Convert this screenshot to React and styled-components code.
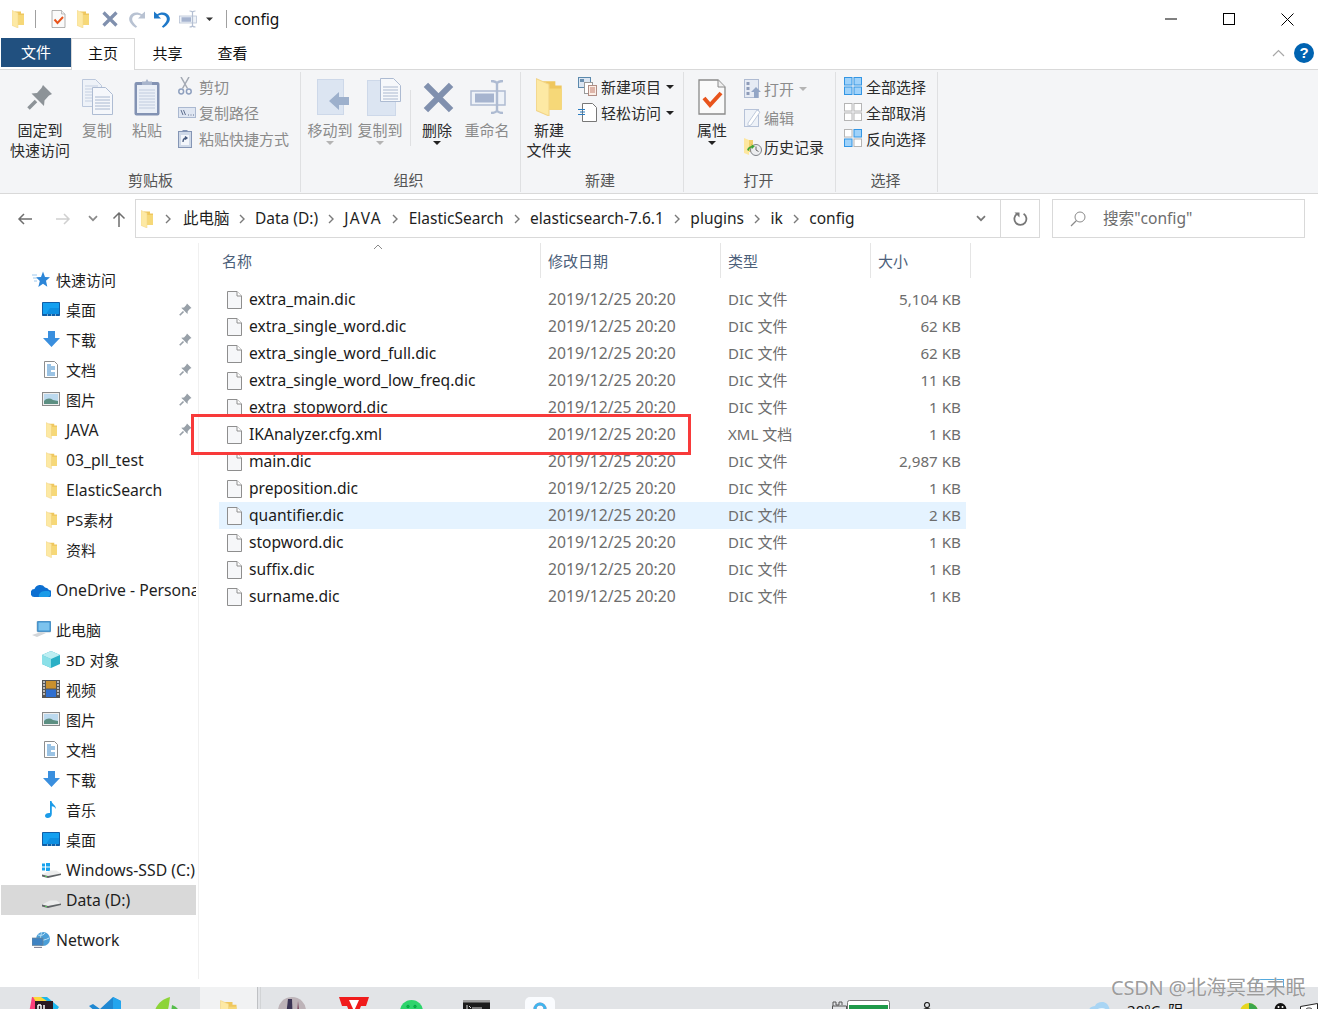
import React from "react";
import styled, { createGlobalStyle } from "styled-components";

const Global = createGlobalStyle`
  html, body { margin: 0; padding: 0; background: #fff; }
  body { font-family: "Noto Sans", "Noto Sans CJK SC", sans-serif; font-size: 15px; color: #1e1e1e; overflow: hidden; }
  * { box-sizing: border-box; }
  svg { display: block; flex-shrink: 0; }
`;

const Page = styled.div`
  position: relative; width: 1318px; height: 1009px; overflow: hidden;
  display: flex; flex-direction: column; background: #fff;
`;

/* ---------- title bar ---------- */
const TitleBar = styled.div`
  height: 38px; display: flex; align-items: center; padding-left: 12px; flex: none;
`;
const QuickSlot = styled.div`
  width: ${p => p.$w}px; display: flex; justify-content: flex-start; flex: none;
`;
const TitleSep = styled.div`
  width: 1px; height: 18px; background: #a0a0a0; flex: none;
  margin: 0 ${p => p.$r}px 0 ${p => p.$l}px;
`;
const TitleText = styled.span`
  font-size: 15.5px; color: #111; line-height: 20px;
`;
const WinControls = styled.div`
  margin-left: auto; display: flex; align-items: center; padding-right: 24px; gap: 46px;
`;

/* ---------- tabs ---------- */
const TabRow = styled.div`
  height: 32px; display: flex; flex: none; position: relative; padding-left: 1px;
  border-bottom: 1px solid #d9d9d9; align-items: stretch;
`;
const FileTab = styled.div`
  width: 70px; height: 29px; background: #21507f; color: #fff; display: flex;
  align-items: center; justify-content: center; font-size: 15px; padding-bottom: 2px;
`;
const HomeTab = styled.div`
  width: 64px; height: 32px; background: #fff; border: 1px solid #d9d9d9; border-bottom: none;
  display: flex; align-items: center; justify-content: center; font-size: 15px; color: #111;
  padding-bottom: 5px; z-index: 1;
`;
const PlainTab = styled.div`
  width: ${p => p.$w}px; display: flex; align-items: center; justify-content: center;
  font-size: 15px; color: #111; height: 29px; padding-bottom: 1px;
`;
const TabRight = styled.div`
  margin-left: auto; display: flex; align-items: center; gap: 9px; padding-right: 4px; height: 30px;
`;
const Help = styled.div`
  width: 20px; height: 20px; border-radius: 50%; background: #0063b1; color: #fff;
  font: bold 15px/20px "Liberation Sans", sans-serif; text-align: center;
`;

/* ---------- ribbon ---------- */
const Ribbon = styled.div`
  height: 124px; background: #f4f5f7; border-bottom: 1px solid #d9d9d9; display: flex; flex: none; padding: 2px 0 1px 1px;
`;
const Group = styled.div`
  width: ${p => p.$w}px; flex: none; border-right: 1px solid #dfe0e2; display: flex; flex-direction: column;
`;
const GroupBody = styled.div`
  height: 98px; display: flex; padding-left: ${p => p.$pl}px;
`;
const GroupLabel = styled.div`
  height: 20px; line-height: 20px; text-align: center; font-size: 15px; color: #555;
  padding-right: ${p => p.$pr || 0}px;
`;
const Big = styled.div`
  width: ${p => p.$w}px; flex: none; display: flex; flex-direction: column; align-items: center;
  font-size: 15px; line-height: 20px; color: ${p => p.$off ? "#8b8b8b" : "#2b2b2b"}; text-align: center;
  margin-right: ${p => p.$mr || 0}px;
`;
const BigIcon = styled.div`
  height: 48px; display: flex; align-items: center; justify-content: center; width: 100%;
  padding-top: 2px; padding-left: ${p => p.$ox || 0}px;
`;
const BigLine = styled.div`
  white-space: nowrap; height: 20px;
`;
const Caret = styled.div`
  width: 0; height: 0; border-left: 4px solid transparent; border-right: 4px solid transparent;
  border-top: 4px solid ${p => p.$off ? "#b4b4b4" : "#222"};
  margin-top: 1px; margin-left: ${p => p.$ml || 0}px;
`;
const VSep = styled.div`
  width: 1px; height: 56px; background: #dfe0e2; margin: 18px 1px 0 5px; flex: none;
`;
const SmallCol = styled.div`
  display: flex; flex-direction: column; margin-left: ${p => p.$ml || 0}px; padding-top: ${p => p.$pt ?? 1}px;
`;
const Small = styled.div`
  height: ${p => p.$h || 26}px; display: flex; align-items: center; font-size: 15px; white-space: nowrap;
  color: ${p => p.$off ? "#8b8b8b" : "#2b2b2b"};
`;
const SmallIcon = styled.span`
  width: ${p => p.$w}px; display: flex; justify-content: flex-start; flex: none;
`;

/* ---------- address row ---------- */
const AddressRow = styled.div`
  height: 49px; flex: none; display: flex; padding: 5px 13px 0 7px; align-items: flex-start;
`;
const NavBtn = styled.div`
  width: ${p => p.$w}px; height: 39px; display: flex; align-items: center; justify-content: center; flex: none;
`;
const AddressBox = styled.div`
  width: 905px; height: 39px; border: 1px solid #d9d9d9; display: flex; align-items: center; flex: none; padding-left: 5px;
`;
const Crumb = styled.span`
  font-size: 15.5px; color: #1e1e1e; white-space: nowrap; margin-top: -2px;
  letter-spacing: ${p => p.$ls || 0}px;
`;
const CrumbChev = styled.span`
  width: ${p => p.$w || 26.5}px; display: flex; justify-content: center; flex: none;
`;
const BoxEnd = styled.div`
  margin-left: auto; display: flex; height: 100%; align-items: center;
`;
const BoxBtn = styled.div`
  width: ${p => p.$w}px; height: 100%; display: flex; align-items: center; justify-content: center;
  border-left: ${p => p.$line ? "1px solid #d9d9d9" : "none"};
`;
const SearchBox = styled.div`
  width: 253px; height: 39px; margin-left: 12px; border: 1px solid #d9d9d9; display: flex; align-items: center;
  padding-left: 17px; gap: 17px; flex: none;
`;
const SearchText = styled.span`
  color: #6d6d6d; font-size: 15.6px; margin-top: -2px;
`;

/* ---------- body ---------- */
const Body = styled.div`
  flex: 1; display: flex; min-height: 0;
`;
const Sidebar = styled.div`
  width: 199px; flex: none; border-right: 1px solid #f0f0f0; padding: 22px 0 0 1px; margin-bottom: 8px;
`;
const NavSection = styled.div`
  margin-top: ${p => p.$gap ? 10 : 0}px;
`;
const NavRow = styled.div`
  width: 195px; height: 30px; display: flex; align-items: center; overflow: hidden; position: relative;
  padding: 0 0 ${p => p.$latin ? 0 : 2}px ${p => p.$lvl === 2 ? 41 : 31}px; background: ${p => p.$sel ? "#d9d9d9" : "transparent"};
  font-size: ${p => p.$latin ? 15.75 : 15}px; color: #1e1e1e; white-space: nowrap;
`;
const NavIcon = styled.span`
  width: 18px; margin-right: 6px; display: flex; justify-content: center; flex: none;
`;
const NavPin = styled.span`
  position: absolute; right: 4px; top: 8px;
`;
const Main = styled.div`
  flex: 1; padding-left: 20px; position: relative;
`;
const Head = styled.div`
  display: grid; grid-template-columns: 322px 180px 150px 100px; height: 43px; position: relative; width: 752px;
`;
const HeadCell = styled.div`
  height: 35px; border-right: 1px solid #e5e5e5; color: #4c607a; font-size: 15px; display: flex; align-items: center;
  padding-left: ${p => p.$first ? 3 : 7}px; position: relative;
`;
const SortCaret = styled.span`
  position: absolute; left: 154px; top: 1px;
`;
const FileRow = styled.div`
  display: grid; grid-template-columns: 321px 180px 150px 96px; width: 747px; height: 27px; align-items: center;
  background: ${p => p.$hl ? "#e5f3ff" : "transparent"};
`;
const NameCell = styled.div`
  display: flex; align-items: center; padding-left: 8px; gap: 7px; font-size: 15.6px; color: #1a1a1a; white-space: nowrap;
`;
const NameText = styled.span`
  margin-top: -2px;
`;
const InfoCell = styled.div`
  padding: 0 0 2px 8px; color: #6d6d6d; font-size: ${p => p.$date ? 15.7 : 15}px; white-space: nowrap;
`;
const SizeCell = styled.div`
  padding: 0 5px 2px 0; text-align: right; color: #6d6d6d; font-size: 15.2px; white-space: nowrap;
`;
const RedBox = styled.div`
  position: absolute; left: 191px; top: 414px; width: 500px; height: 41px; border: 3px solid #f83a3a; z-index: 4;
`;

/* ---------- taskbar ---------- */
const Taskbar = styled.div`
  height: 22px; flex: none; background: #e2e4e7; display: flex; overflow: hidden; padding-left: 14px;
`;
const TaskSlot = styled.div`
  width: ${p => p.$w}px; height: 40px; flex: none; display: flex; justify-content: center;
  padding-top: ${p => p.$top ?? 10}px; background: ${p => p.$active ? "#f1f2f3" : "transparent"};
  margin-left: ${p => p.$ml || 0}px;
  font-size: 15px; color: #111; white-space: pre;
`;
const TaskBars = styled.div`
  width: 4px; height: 22px; flex: none; border-left: 1px solid #bfc1c4; border-right: 1px solid #d2d4d6;
`;
const Watermark = styled.div`
  position: absolute; left: 1111px; top: 975px; z-index: 5; font: 20px/26px "Noto Sans", "Noto Sans CJK SC", sans-serif;
  color: rgba(130,130,130,.8); text-shadow: 0 0 1px #fff; white-space: nowrap; letter-spacing: -.2px;
`;
const WaterBlue = styled.div`
  position: absolute; left: 1256px; top: 979px; width: 28px; height: 9px; border: 1px solid #54a9dd; border-bottom: none; z-index: 3;
`;

/* ---------- icons ---------- */
const Folder = ({ w = 12, h = 18 }) => (
  <svg width={w} height={h} viewBox="0 0 12 18">
    <path d="M3 1.5h6v2h3v11.5H3z" fill="#efc75e" />
    <path d="M0 .4 6 3v15L0 15.4z" fill="#fde9a4" />
    <path d="M6 5h6v10H6z" fill="#f6d878" />
    <path d="M0 .4 6 3v15L0 15.4z" fill="none" stroke="#f2d488" strokeWidth=".5" />
  </svg>
);
const CheckDoc = ({ w = 15, h = 18, sw = 1 }) => (
  <svg width={w} height={h} viewBox="0 0 28 36">
    <path d="M1 1h19l7 7v27H1z" fill="#fafafa" stroke="#8a8a8a" strokeWidth={sw * 1.3} />
    <path d="M20 1v7h7" fill="#efefef" stroke="#8a8a8a" strokeWidth={sw} />
    <path d="M6 19l6 7 11-12" fill="none" stroke="#e8541c" strokeWidth="4" />
  </svg>
);
const Cross = ({ s = 16, c = "#8090ae" }) => (
  <svg width={s} height={s} viewBox="0 0 16 16">
    <path d="M1.5 1.5 14.5 14.5M14.5 1.5 1.5 14.5" stroke={c} strokeWidth="3.2" />
  </svg>
);
const Undo = ({ c = "#1e78c8", flip }) => (
  <svg width="18" height="18" viewBox="0 0 18 18" style={flip ? { transform: "scaleX(-1)" } : undefined}>
    <path d="M1 1.5v7h7L5.2 5.8C8 3.8 12.5 4.6 13.6 7.8c.8 2.600-.7 5-4.800 9l1.600 1c5-3.600 7.200-7 6.200-10.600C15.200 2.500 9 1 4.200 4.200z" fill={c} />
  </svg>
);
const Rename = ({ w = 18, h = 18, c = "#b4bfd2", fill = "#a6b4cf" }) => (
  <svg width={w} height={h} viewBox="0 0 36 34">
    <rect x="1" y="11" width="34" height="14" fill="#eef2f8" stroke={c} strokeWidth="1.500" />
    <rect x="5" y="13.500" width="19" height="9" fill={fill} />
    <path d="M21 1c3 0 5 1 6 2 1-1 3-2 6-2M27 3v28M21 33c3 0 5-1 6-2 1 1 3 2 6 2" fill="none" stroke={c} strokeWidth="2.400" />
  </svg>
);
const Tri = ({ c = "#222", s = 8 }) => (
  <svg width={s} height={s / 2 + 1} viewBox="0 0 8 5"><path d="M0 .5h8L4 4.500z" fill={c} /></svg>
);
const Pin = ({ s = 13, c = "#98a0a8" }) => (
  <svg width={s} height={s} viewBox="0 0 26 26">
    <path d="M16 1 25 10 22 11.500 17.500 16.500 17 22 4.500 9.500 10 9 14.500 4z" fill={c} />
    <path d="M9 17 1.500 24.500" stroke={c} strokeWidth="3.500" />
  </svg>
);
const CopyIcon = () => (
  <svg width="31" height="36" viewBox="0 0 31 36">
    <path d="M.5.5h13l6 6v21H.500z" fill="#eef2f8" stroke="#bcc8dc" />
    <path d="M3 7h13M3 10h13M3 13h13M3 16h13M3 19h13M3 22h13" stroke="#c5d0e2" />
    <path d="M10.500 8.500h13l7 7v20h-20z" fill="#f5f7fb" stroke="#aebcd3" />
    <path d="M13 18h15M13 21h15M13 24h15M13 27h15M13 30h15" stroke="#a9b8d0" />
  </svg>
);
const PasteIcon = () => (
  <svg width="26" height="38" viewBox="0 0 26 38">
    <rect x=".5" y="4" width="25" height="33.500" rx="2" fill="#8292b3" />
    <rect x="3" y="7" width="20" height="28" fill="#eaeff7" />
    <path d="M5 12h16M5 15h16M5 18h16M5 21h16M5 24h16M5 27h16M5 30h16" stroke="#c0cbde" />
    <path d="M8 7V3.500h3.500L13 1l1.500 2.500H18V7z" fill="#a7b4cc" />
  </svg>
);
const Scissors = () => (
  <svg width="14" height="18" viewBox="0 0 14 18">
    <path d="M3 0l6.500 11.500M11 0 4.500 11.500" stroke="#a3a9b3" strokeWidth="1.500" />
    <circle cx="3.200" cy="14.500" r="2.400" fill="none" stroke="#8fa0bf" strokeWidth="1.500" />
    <circle cx="10.800" cy="14.500" r="2.400" fill="none" stroke="#8fa0bf" strokeWidth="1.500" />
  </svg>
);
const PathIcon = () => (
  <svg width="18" height="11" viewBox="0 0 18 11">
    <rect x=".5" y=".5" width="17" height="10" fill="#dfe6f2" stroke="#aab8d0" />
    <path d="M3 3l2 5M5.500 3l2 5" stroke="#5f6f8f" />
    <path d="M10 8h1M12.500 8h1M15 8h1" stroke="#5f6f8f" />
  </svg>
);
const ShortcutIcon = () => (
  <svg width="14" height="19" viewBox="0 0 14 19">
    <rect x=".5" y="2.500" width="13" height="16" fill="#cfd9e8" stroke="#8495b5" />
    <path d="M4.500 2.500V1h5v1.500z" fill="#8495b5" />
    <rect x="3" y="6" width="8" height="10" fill="#f3f6fb" />
    <path d="M5 13c0-3 1.500-4 3.500-4M7 7.500l2 1.500-2 1.500" fill="none" stroke="#46597d" strokeWidth="1.300" />
  </svg>
);
const MoveIcon = () => (
  <svg width="33" height="36" viewBox="0 0 33 36">
    <rect x=".5" y=".5" width="26" height="35" fill="#dce5f2" stroke="#cdd8e9" />
    <path d="M12 27 22 36v-5h10V23H22v-5z" transform="translate(0 -5)" fill="#9db0cc" />
  </svg>
);
const CopyToIcon = () => (
  <svg width="34" height="38" viewBox="0 0 34 38">
    <rect x=".5" y="2.500" width="28" height="35" fill="#dce5f2" stroke="#cdd8e9" />
    <path d="M13.500.5h13l7 7v16h-20z" fill="#f6f8fb" stroke="#adbbd2" />
    <path d="M16 9h15M16 12h15M16 15h15M16 18h15M16 21h15" stroke="#aab8cf" />
  </svg>
);
const NewItemIcon = () => (
  <svg width="19" height="19" viewBox="0 0 19 19">
    <rect x=".5" y=".5" width="12" height="10" fill="#dce6f2" stroke="#5b89ad" />
    <rect x="2" y="2" width="4" height="3" fill="#6a8fb0" />
    <rect x="6.500" y="5.500" width="8" height="11" fill="#fff" stroke="#9a9a9a" />
    <rect x="10.500" y="8.500" width="8" height="10" fill="#fbeee6" stroke="#b08d84" />
    <path d="M12 11h5M12 13h5M12 15h5" stroke="#c27d6c" />
  </svg>
);
const EasyIcon = () => (
  <svg width="19" height="19" viewBox="0 0 19 19">
    <path d="M4.500.5h10l4 4v14h-14z" fill="#fff" stroke="#777" />
    <path d="M0 6.500h7M2 9h5M0 11.500h7" stroke="#2b7cc0" />
  </svg>
);
const OpenIcon = () => (
  <svg width="17" height="19" viewBox="0 0 17 19">
    <rect x=".5" y=".5" width="14" height="18" fill="#e6ebf4" stroke="#afbbd2" />
    <rect x="2.500" y="3" width="3" height="3" fill="#8d9bb8" />
    <rect x="2.500" y="8" width="3" height="3" fill="#8d9bb8" />
    <rect x="2.500" y="13" width="3" height="3" fill="#8d9bb8" />
    <path d="M12 8l5 5h-3v6h-4v-6H7z" fill="#93a6c6" />
  </svg>
);
const EditIcon = () => (
  <svg width="17" height="19" viewBox="0 0 17 19">
    <rect x=".5" y="1.500" width="14" height="17" fill="#eef2f8" stroke="#b6c2d8" />
    <path d="M4 15 13 2l3 2-9 13-3 1z" fill="#fff" stroke="#c0cbdd" />
  </svg>
);
const HistoryIcon = () => (
  <svg width="18" height="18" viewBox="0 0 18 18">
    <path d="M0 0l5 2v15l-5-2z" fill="#fde7a0" />
    <path d="M5 2h4v12H5z" fill="#f2cf6b" />
    <circle cx="12" cy="12" r="5.500" fill="#ecedef" stroke="#7f8388" />
    <path d="M12 8.500V12l2.500 1.500" stroke="#666" fill="none" />
    <path d="M3 12c1-3 3-4 5-4l-1-1.500 4 1.500-3 3-.5-1.500C6 10 5 11 5 13z" fill="#3fa535" />
  </svg>
);
const Tiles = ({ on = [1, 1, 1, 1] }) => (
  <svg width="18" height="18" viewBox="0 0 18 18">
    {[[0, 0], [9.5, 0], [0, 9.500], [9.500, 9.500]].map(([x, y], i) => (
      <rect key={i} x={x + .5} y={y + .5} width="7.500" height="7.500"
        fill={on[i] ? "#9fd2fa" : "#fff"} stroke={on[i] ? "#3396e4" : "#b5b5b5"} />
    ))}
  </svg>
);
const Arrow = ({ c = "#6e6e6e", flip }) => (
  <svg width="16" height="14" viewBox="0 0 16 14" style={flip ? { transform: "scaleX(-1)" } : undefined}>
    <path d="M15 7H2M7 2 2 7l5 5" fill="none" stroke={c} strokeWidth="1.500" />
  </svg>
);
const ChevDown = ({ c = "#777", w = 10 }) => (
  <svg width={w} height="7" viewBox="0 0 10 7"><path d="M1 1.200 5 5.200l4-4" fill="none" stroke={c} strokeWidth="1.700" /></svg>
);
const ChevRight = () => (
  <svg width="6" height="10" viewBox="0 0 6 10"><path d="M1 1l4 4-4 4" fill="none" stroke="#7a7a7a" strokeWidth="1.400" /></svg>
);
const UpArrow = () => (
  <svg width="14" height="16" viewBox="0 0 14 16"><path d="M7 16V2M1.500 7.500 7 2l5.500 5.500" fill="none" stroke="#6e6e6e" strokeWidth="1.500" /></svg>
);
const Refresh = () => (
  <svg width="15" height="16" viewBox="0 0 15 16">
    <path d="M4.200 2.800a6 6 0 1 0 6.400 0" fill="none" stroke="#777" strokeWidth="1.800" />
    <path d="M1.500 1.500h5v5z" fill="#777" />
  </svg>
);
const Magnifier = () => (
  <svg width="16" height="16" viewBox="0 0 16 16">
    <circle cx="10" cy="6" r="5" fill="none" stroke="#8a8a8a" />
    <path d="M6.500 9.500 1 15" stroke="#8a8a8a" strokeWidth="1.200" />
  </svg>
);
const FileIcon = () => (
  <svg width="15" height="18" viewBox="0 0 15 18">
    <path d="M.5.5h9.500l4.500 4.500v12.500H.500z" fill="#f6f7f9" stroke="#8e8e8e" />
    <path d="M10 .5V5h4.500" fill="#fff" stroke="#8e8e8e" />
  </svg>
);
const Star = () => (
  <svg width="18" height="17" viewBox="0 0 18 17">
    <path d="M11 .5l2 5.500 5 .3-4 3.500 1.300 6L11 12.800 6.300 16l1.500-6L4 6.300l5-.3z" fill="#2c86d8" />
    <path d="M0 4h5M1 7h4M2 10h3" stroke="#9cc8ee" />
  </svg>
);
const Desktop = () => (
  <svg width="18" height="14" viewBox="0 0 18 14">
    <rect width="18" height="14" rx=".8" fill="#0f5ea8" />
    <rect x="1" y="1" width="16" height="11" fill="#14a0f0" />
    <path d="M4 12 8 6l9 0v6z" fill="#0d8ee0" />
    <path d="M5 13h1M9 13h1M13 13h1" stroke="#dff" />
  </svg>
);
const Download = () => (
  <svg width="17" height="16" viewBox="0 0 17 16">
    <path d="M5 0h7v7h5l-8.500 9L0 7h5z" fill="#3a8fde" />
  </svg>
);
const Docs = () => (
  <svg width="14" height="17" viewBox="0 0 14 17">
    <path d="M.5.5h10l3 3v13H.500z" fill="#fff" stroke="#8d8d8d" />
    <path d="M3 4h4M3 6h8M3 8h8M3 10h4M3 12h8M3 14h8" stroke="#3786c8" />
  </svg>
);
const Pictures = () => (
  <svg width="18" height="14" viewBox="0 0 18 14">
    <rect x=".5" y=".5" width="17" height="13" fill="#eee" stroke="#8a8a8a" />
    <rect x="2" y="2" width="14" height="10" fill="#bcd9ee" />
    <path d="M2 9c3-3 6-3 9-1l5 1v3H2z" fill="#5c8f82" />
  </svg>
);
const Cloud = () => (
  <svg width="20" height="13" viewBox="0 0 20 13">
    <path d="M4 13a4 4 0 0 1-.5-8A6 6 0 0 1 14 3.500a4.500 4.500 0 0 1 4 2.500 3.500 3.500 0 0 1-1 7z" fill="#0c6fd1" />
    <path d="M8 13c-1-3 2-6 6-6 3 0 4 0 4 0a3.500 3.500 0 0 1-1 6z" fill="#1a9be8" />
  </svg>
);
const PC = () => (
  <svg width="20" height="17" viewBox="0 0 20 17">
    <rect x="6" y="0" width="14" height="11" rx="1" fill="#3d90cf" stroke="#7a99ad" strokeWidth=".5" />
    <rect x="7.500" y="1.500" width="11" height="8" fill="#7cc3ee" />
    <path d="M1 14l9-3 5 1-9 4z" fill="#d3d6d9" />
  </svg>
);
const Cube = () => (
  <svg width="18" height="17" viewBox="0 0 18 17">
    <path d="M9 0l9 4v9l-9 4-9-4V4z" fill="#2ab0c6" />
    <path d="M0 4l9 4v9l-9-4z" fill="#8be0e8" />
    <path d="M9 0l9 4-9 4-9-4z" fill="#bdeef2" />
  </svg>
);
const Video = () => (
  <svg width="18" height="18" viewBox="0 0 18 18">
    <rect width="18" height="18" fill="#555" />
    <rect x="4" y="1" width="10" height="7.500" fill="#c9902e" />
    <rect x="4" y="9.500" width="10" height="7.500" fill="#2f6fd0" />
    <path d="M1 2h2M1 5h2M1 8h2M1 11h2M1 14h2M15 2h2M15 5h2M15 8h2M15 11h2M15 14h2" stroke="#ddd" strokeWidth="1.300" />
  </svg>
);
const Music = () => (
  <svg width="12" height="17" viewBox="0 0 12 17">
    <path d="M5 0h1.500c.3 3 4.500 4 4.500 8-.8-1.500-2.500-2.500-4.200-2.700V13c0 2.500-2 4-4.300 4C.8 17 0 16 0 14.800 0 13 2 11.700 5 12z" fill="#1b9be8" />
  </svg>
);
const Drive = ({ win }) => (
  <svg width="19" height="15" viewBox="0 0 19 15">
    {win && <path d="M0 .5h3v3H0zM4 0h4v3.500H4zM0 4.500h3v3H0zM4 4.500h4V8H4z" fill="#19a3ee" />}
    <path d="M0 11.500 8 7.500h6.500l4.500 3L6 13z" fill="#eceded" />
    <path d="M0 11.500 6 13l13-2.500V12L6 15l-6-1.500z" fill="#5f6366" />
    <rect x="3" y="13" width="2" height="1" fill="#5ac85a" />
  </svg>
);
const NetworkIcon = () => (
  <svg width="19" height="16" viewBox="0 0 19 16">
    <circle cx="11" cy="7" r="7" fill="#4b9fd8" />
    <path d="M6 3c3 1 6 0 7-2M5 8c4 1 9 0 12-2M10 0c-2 4-2 9 1 14" stroke="#bfe3f6" fill="none" />
    <rect x="0" y="6" width="11" height="7.500" fill="#3e83c2" stroke="#6f8595" strokeWidth=".7" />
    <path d="M2 15.500h8" stroke="#889" strokeWidth="1.300" />
  </svg>
);

/* taskbar drawings */
const IdeaIcon = () => (
  <svg width="30" height="30" viewBox="0 0 30 30">
    <path d="M3 0h9l-3 16H0z" fill="#fc3f7a" />
    <path d="M8 0h10l12 10-8 12z" fill="#1cb6ee" />
    <path d="M4 0h8l6 4-8 6z" fill="#fcd83a" />
    <rect x="6" y="4" width="18" height="18" fill="#2a1a22" />
    <path d="M9 8v6M12 8v6M9 8h3M9 14h3M15 8v6h3" stroke="#fff" strokeWidth="1.500" fill="none" />
  </svg>
);
const VSCode = () => (
  <svg width="32" height="30" viewBox="0 0 32 30">
    <path d="M24 0l8 4v22l-8 4-13-12-7 5-4-2 7-6-7-6 4-2 7 5z" fill="#1f88d2" />
    <path d="M24 0l8 4v22l-8 4z" fill="#23a5ee" />
  </svg>
);
const GreenApp = () => (
  <svg width="31" height="30" viewBox="0 0 31 30">
    <path d="M2 18C3 8 10 2 18 0c-1 8-2 18-8 26z" fill="#8dd438" />
    <path d="M20 8c6 2 10 8 10 16H18z" fill="#55bd4a" />
  </svg>
);
const Avatar = () => (
  <svg width="28" height="28" viewBox="0 0 28 28">
    <circle cx="14" cy="14" r="14" fill="#bdb3b8" />
    <path d="M7 28 10 2h4l1 26z" fill="#3b3454" />
    <path d="M20 4l3 24h-5z" fill="#7d4a60" />
  </svg>
);
const Wps = () => (
  <svg width="30" height="26" viewBox="0 0 30 26">
    <path d="M0 0h30l-3 9H22l-7 17L8 9H3z" fill="#f01c1c" />
    <path d="M10 3l5 11 5-11z" fill="#fff" />
  </svg>
);
const WeChat = () => (
  <svg width="23" height="23" viewBox="0 0 23 23">
    <circle cx="11.500" cy="11.500" r="11.500" fill="#2fd46c" />
    <circle cx="8" cy="6.500" r="1.300" fill="#0c3" stroke="#075" strokeWidth=".5" />
    <circle cx="15" cy="6.500" r="1.300" fill="#0c3" stroke="#075" strokeWidth=".5" />
  </svg>
);
const Cmd = () => (
  <svg width="27" height="24" viewBox="0 0 27 24">
    <rect width="27" height="24" fill="#1b1b1b" />
    <rect width="27" height="2.500" fill="#9d9d9d" />
    <path d="M3 6h2M3 8h2M6 6l2 2M9 8h10" stroke="#ddd" />
  </svg>
);
const WhiteApp = () => (
  <svg width="30" height="30" viewBox="0 0 30 30">
    <rect width="30" height="30" rx="5" fill="#fafcff" />
    <circle cx="15" cy="12" r="5" fill="none" stroke="#f07a9a" strokeWidth="3" />
    <path d="M10 12a5 5 0 0 1 10 0" fill="none" stroke="#3fb6ee" strokeWidth="3" />
  </svg>
);
const Battery = () => (
  <svg width="59" height="20" viewBox="0 0 59 20">
    <path d="M1 6V2h3v3h3V2h3v3" fill="none" stroke="#555" />
    <path d="M.5 6h14V20H.500z" fill="none" stroke="#555" />
    <rect x="15.500" y=".5" width="42" height="18" rx="2" fill="#fff" stroke="#777" />
    <rect x="17" y="5" width="39" height="14" fill="#1f9a4a" />
  </svg>
);
const Person = () => (
  <svg width="10" height="12" viewBox="0 0 10 12">
    <circle cx="5" cy="3" r="2.500" fill="none" stroke="#222" strokeWidth="1.200" />
    <path d="M0 12c0-4 2-5.500 5-5.500S10 8 10 12" fill="none" stroke="#222" strokeWidth="1.200" />
  </svg>
);
const Weather = () => (
  <svg width="22" height="12" viewBox="0 0 22 12">
    <path d="M0 12C0 6 4 4 7 4c1-3 4-4 7-4 5 0 8 4 8 12z" fill="#a9d5f4" />
    <path d="M7 12c0-4 3-6 7-6 4 0 6 3 6 6z" fill="#e9f5fd" />
  </svg>
);
const YellowTray = () => (
  <svg width="18" height="12" viewBox="0 0 18 12">
    <circle cx="9" cy="9" r="9" fill="#e6d61f" />
    <path d="M9 0a9 9 0 0 1 9 9H9z" fill="#3ba64c" />
  </svg>
);
const QQ = () => (
  <svg width="15" height="12" viewBox="0 0 15 12">
    <ellipse cx="7.500" cy="7" rx="6" ry="7" fill="#111" />
    <circle cx="5.500" cy="4" r="1" fill="#fff" /><circle cx="9.500" cy="4" r="1" fill="#fff" />
  </svg>
);
const TrayBox = () => (
  <svg width="18" height="12" viewBox="0 0 18 12">
    <path d="M.5 3.500 17.500.5v11H.500z" fill="#fff" stroke="#222" />
    <rect x="6" y="5" width="6" height="6" rx="2" fill="none" stroke="#444" />
  </svg>
);

/* ---------- data ---------- */
const files = [
  ["extra_main.dic", "DIC 文件", "5,104 KB"],
  ["extra_single_word.dic", "DIC 文件", "62 KB"],
  ["extra_single_word_full.dic", "DIC 文件", "62 KB"],
  ["extra_single_word_low_freq.dic", "DIC 文件", "11 KB"],
  ["extra_stopword.dic", "DIC 文件", "1 KB"],
  ["IKAnalyzer.cfg.xml", "XML 文档", "1 KB"],
  ["main.dic", "DIC 文件", "2,987 KB"],
  ["preposition.dic", "DIC 文件", "1 KB"],
  ["quantifier.dic", "DIC 文件", "2 KB", true],
  ["stopword.dic", "DIC 文件", "1 KB"],
  ["suffix.dic", "DIC 文件", "1 KB"],
  ["surname.dic", "DIC 文件", "1 KB"],
];
const crumbs = ["此电脑", "Data (D:)", "JAVA", "ElasticSearch", "elasticsearch-7.6.1", "plugins", "ik", "config"];

const Nav = ({ icon, lvl = 2, pin, sel, latin, children }) => (
  <NavRow $lvl={lvl} $sel={sel} $latin={latin}>
    <NavIcon>{icon}</NavIcon>
    {children}
    {pin && <NavPin><Pin /></NavPin>}
  </NavRow>
);

export default function App() {
  return (
    <Page>
      <Global />
      <TitleBar>
        <Folder />
        <TitleSep $l={11} $r={15} />
        <QuickSlot $w={26}><CheckDoc /></QuickSlot>
        <QuickSlot $w={25}><Folder /></QuickSlot>
        <QuickSlot $w={26}><Cross /></QuickSlot>
        <QuickSlot $w={25}><Undo c="#b8c2d2" flip /></QuickSlot>
        <QuickSlot $w={26}><Undo /></QuickSlot>
        <QuickSlot $w={27}><Rename /></QuickSlot>
        <Tri c="#333" s={7} />
        <TitleSep $l={13} $r={7} />
        <TitleText>config</TitleText>
        <WinControls>
          <svg width="12" height="12" viewBox="0 0 12 12"><path d="M0 6h12" stroke="#000" /></svg>
          <svg width="12" height="12" viewBox="0 0 12 12"><rect x=".5" y=".5" width="11" height="11" fill="none" stroke="#000" /></svg>
          <svg width="13" height="13" viewBox="0 0 13 13"><path d="M.5.5l12 12M12.500.5l-12 12" stroke="#000" /></svg>
        </WinControls>
      </TitleBar>

      <TabRow>
        <FileTab>文件</FileTab>
        <HomeTab>主页</HomeTab>
        <PlainTab $w={65}>共享</PlainTab>
        <PlainTab $w={65}>查看</PlainTab>
        <TabRight>
          <svg width="13" height="8" viewBox="0 0 13 8"><path d="M1 7l5.500-5.500L12 7" fill="none" stroke="#a8a8a8" strokeWidth="1.200" /></svg>
          <Help>?</Help>
        </TabRight>
      </TabRow>

      <Ribbon>
        <Group $w={300}>
          <GroupBody $pl={9}>
            <Big $w={60}><BigIcon><Pin s={26} c="#8d9398" /></BigIcon><BigLine>固定到</BigLine><BigLine>快速访问</BigLine></Big>
            <Big $w={54} $off><BigIcon><CopyIcon /></BigIcon><BigLine>复制</BigLine></Big>
            <Big $w={46} $off $mr={8}><BigIcon><PasteIcon /></BigIcon><BigLine>粘贴</BigLine></Big>
            <SmallCol>
              <Small $off><SmallIcon $w={21}><Scissors /></SmallIcon>剪切</Small>
              <Small $off><SmallIcon $w={21}><PathIcon /></SmallIcon>复制路径</Small>
              <Small $off><SmallIcon $w={21}><ShortcutIcon /></SmallIcon>粘贴快捷方式</Small>
            </SmallCol>
          </GroupBody>
          <GroupLabel>剪贴板</GroupLabel>
        </Group>
        <Group $w={220}>
          <GroupBody $pl={4}>
            <Big $w={50} $off><BigIcon $ox={6}><MoveIcon /></BigIcon><BigLine>移动到</BigLine><Caret $off /></Big>
            <Big $w={50} $off><BigIcon $ox={8}><CopyToIcon /></BigIcon><BigLine>复制到</BigLine><Caret $off /></Big>
            <VSep />
            <Big $w={50}><BigIcon $ox={2}><Cross s={31} /></BigIcon><BigLine>删除</BigLine><Caret /></Big>
            <Big $w={50} $off><BigIcon $ox={2}><Rename w={36} h={34} c="#aebbd2" /></BigIcon><BigLine>重命名</BigLine></Big>
          </GroupBody>
          <GroupLabel $pr={4}>组织</GroupLabel>
        </Group>
        <Group $w={163}>
          <GroupBody $pl={3}>
            <Big $w={50}><BigIcon><Folder w={26} h={38} /></BigIcon><BigLine>新建</BigLine><BigLine>文件夹</BigLine></Big>
            <SmallCol $ml={4}>
              <Small><SmallIcon $w={23}><NewItemIcon /></SmallIcon>新建项目<Caret $ml={5} /></Small>
              <Small><SmallIcon $w={23}><EasyIcon /></SmallIcon>轻松访问<Caret $ml={5} /></Small>
            </SmallCol>
          </GroupBody>
          <GroupLabel $pr={4}>新建</GroupLabel>
        </Group>
        <Group $w={152}>
          <GroupBody $pl={3}>
            <Big $w={50}><BigIcon><CheckDoc w={28} h={36} /></BigIcon><BigLine>属性</BigLine><Caret /></Big>
            <SmallCol $ml={7} $pt={2}>
              <Small $h={29} $off><SmallIcon $w={20}><OpenIcon /></SmallIcon>打开<Caret $off $ml={5} /></Small>
              <Small $h={29} $off><SmallIcon $w={20}><EditIcon /></SmallIcon>编辑</Small>
              <Small $h={29}><SmallIcon $w={20}><HistoryIcon /></SmallIcon>历史记录</Small>
            </SmallCol>
          </GroupBody>
          <GroupLabel $pr={2}>打开</GroupLabel>
        </Group>
        <Group $w={102}>
          <GroupBody $pl={8}>
            <SmallCol>
              <Small><SmallIcon $w={22}><Tiles /></SmallIcon>全部选择</Small>
              <Small><SmallIcon $w={22}><Tiles on={[0, 0, 0, 0]} /></SmallIcon>全部取消</Small>
              <Small><SmallIcon $w={22}><Tiles on={[0, 1, 1, 0]} /></SmallIcon>反向选择</Small>
            </SmallCol>
          </GroupBody>
          <GroupLabel $pr={2}>选择</GroupLabel>
        </Group>
      </Ribbon>

      <AddressRow>
        <NavBtn $w={36}><Arrow /></NavBtn>
        <NavBtn $w={40}><Arrow c="#d0d0d0" flip /></NavBtn>
        <NavBtn $w={20}><ChevDown c="#8a8a8a" /></NavBtn>
        <NavBtn $w={32}><UpArrow /></NavBtn>
        <AddressBox>
          <Folder />
          <CrumbChev $w={30}><ChevRight /></CrumbChev>
          {crumbs.map((c, i) => (
            <React.Fragment key={c}>
              <Crumb $ls={c === "JAVA" ? 1.500 : 0}>{c}</Crumb>
              {i < crumbs.length - 1 && <CrumbChev $w={i === 0 ? 25.500 : i === 1 ? 26 : undefined}><ChevRight /></CrumbChev>}
            </React.Fragment>
          ))}
          <BoxEnd>
            <BoxBtn $w={38}><ChevDown /></BoxBtn>
            <BoxBtn $line $w={39}><Refresh /></BoxBtn>
          </BoxEnd>
        </AddressBox>
        <SearchBox><Magnifier /><SearchText>搜索"config"</SearchText></SearchBox>
      </AddressRow>

      <Body>
        <Sidebar>
          <NavSection>
            <Nav lvl={1} icon={<Star />}>快速访问</Nav>
            <Nav pin icon={<Desktop />}>桌面</Nav>
            <Nav pin icon={<Download />}>下载</Nav>
            <Nav pin icon={<Docs />}>文档</Nav>
            <Nav pin icon={<Pictures />}>图片</Nav>
            <Nav pin latin icon={<Folder w={11} h={17} />}>JAVA</Nav>
            <Nav latin icon={<Folder w={11} h={17} />}>03_pll_test</Nav>
            <Nav latin icon={<Folder w={11} h={17} />}>ElasticSearch</Nav>
            <Nav icon={<Folder w={11} h={17} />}>PS素材</Nav>
            <Nav icon={<Folder w={11} h={17} />}>资料</Nav>
          </NavSection>
          <NavSection $gap>
            <Nav lvl={1} latin icon={<Cloud />}>OneDrive - Personal</Nav>
          </NavSection>
          <NavSection $gap>
            <Nav lvl={1} icon={<PC />}>此电脑</Nav>
            <Nav icon={<Cube />}>3D 对象</Nav>
            <Nav icon={<Video />}>视频</Nav>
            <Nav icon={<Pictures />}>图片</Nav>
            <Nav icon={<Docs />}>文档</Nav>
            <Nav icon={<Download />}>下载</Nav>
            <Nav icon={<Music />}>音乐</Nav>
            <Nav icon={<Desktop />}>桌面</Nav>
            <Nav latin icon={<Drive win />}>Windows-SSD (C:)</Nav>
            <Nav sel latin icon={<Drive />}>Data (D:)</Nav>
          </NavSection>
          <NavSection $gap>
            <Nav lvl={1} latin icon={<NetworkIcon />}>Network</Nav>
          </NavSection>
        </Sidebar>
        <Main>
          <Head>
            <SortCaret>
              <svg width="10" height="6" viewBox="0 0 10 6"><path d="M1 5l4-4 4 4" fill="none" stroke="#8a8a8a" /></svg>
            </SortCaret>
            <HeadCell $first>名称</HeadCell>
            <HeadCell>修改日期</HeadCell>
            <HeadCell>类型</HeadCell>
            <HeadCell>大小</HeadCell>
          </Head>
          {files.map(([n, t, s, hl]) => (
            <FileRow key={n} $hl={hl}>
              <NameCell><FileIcon /><NameText>{n}</NameText></NameCell>
              <InfoCell $date>2019/12/25 20:20</InfoCell>
              <InfoCell>{t}</InfoCell>
              <SizeCell>{s}</SizeCell>
            </FileRow>
          ))}
        </Main>
      </Body>

      <Taskbar>
        <TaskSlot $w={60}><IdeaIcon /></TaskSlot>
        <TaskSlot $w={62}><VSCode /></TaskSlot>
        <TaskSlot $w={62}><GreenApp /></TaskSlot>
        <TaskSlot $w={2} />
        <TaskSlot $w={57} $active $top={13}><Folder w={17} h={24} /></TaskSlot>
        <TaskBars />
        <TaskSlot $w={62}><Avatar /></TaskSlot>
        <TaskSlot $w={62}><Wps /></TaskSlot>
        <TaskSlot $w={52} $top={13}><WeChat /></TaskSlot>
        <TaskSlot $w={78} $top={13}><Cmd /></TaskSlot>
        <TaskSlot $w={50}><WhiteApp /></TaskSlot>
        <TaskSlot $w={59} $ml={267} $top={13}><Battery /></TaskSlot>
        <TaskSlot $w={10} $ml={31} $top={15}><Person /></TaskSlot>
        <TaskSlot $w={22} $ml={156} $top={15}><Weather /></TaskSlot>
        <TaskSlot $w={74} $ml={8} $top={12}>20°C  阴</TaskSlot>
        <TaskSlot $w={18} $ml={48} $top={16}><YellowTray /></TaskSlot>
        <TaskSlot $w={15} $ml={15} $top={16}><QQ /></TaskSlot>
        <TaskSlot $w={18} $ml={12} $top={16}><TrayBox /></TaskSlot>
      </Taskbar>

      <RedBox />
      <WaterBlue />
      <Watermark>CSDN @北海冥鱼未眠</Watermark>
    </Page>
  );
}
